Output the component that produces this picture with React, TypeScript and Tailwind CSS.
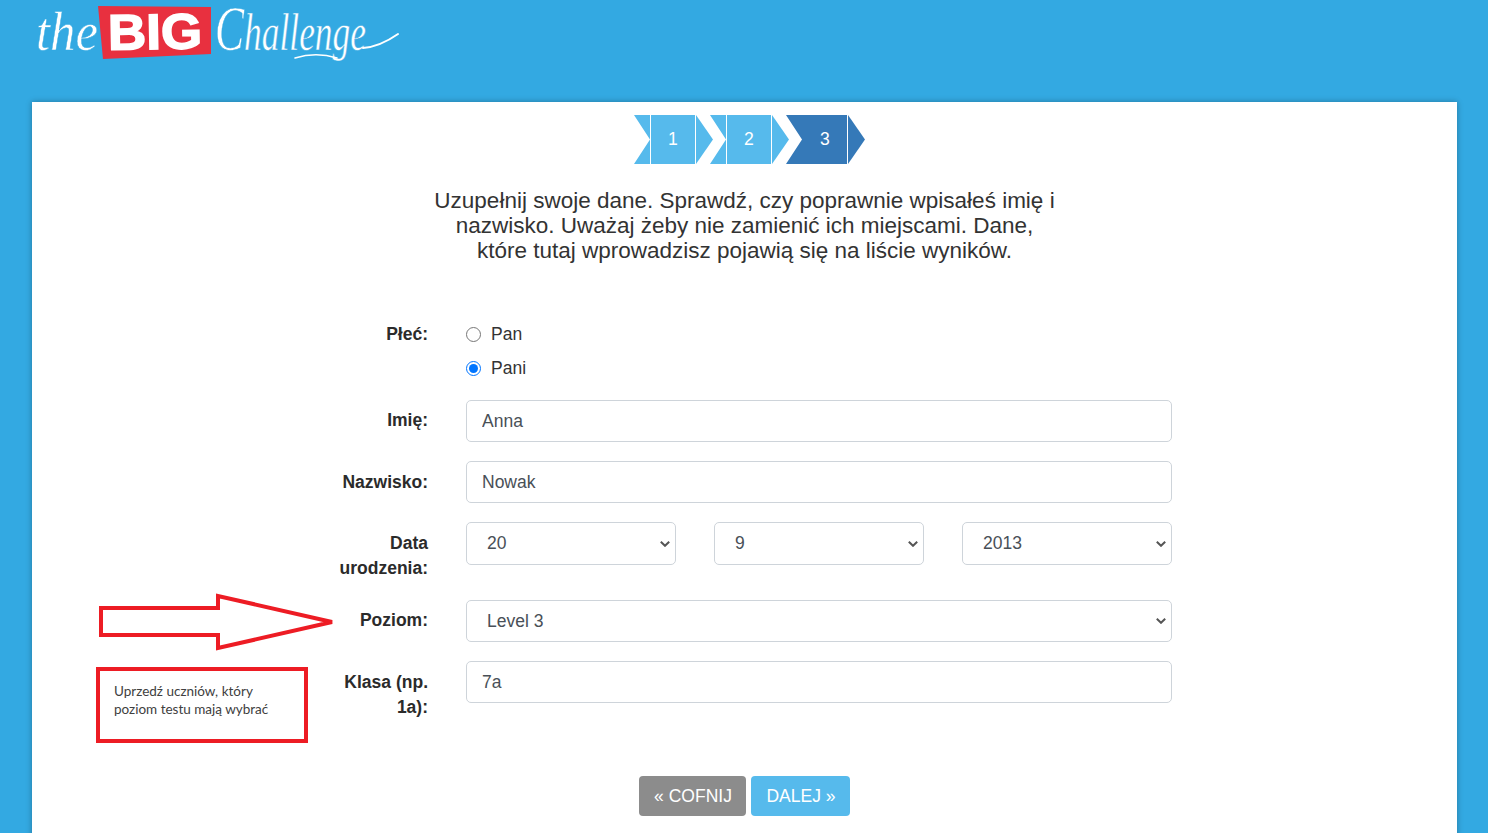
// Sign-up step 3 of the Big Challenge form
const INPUT_CLASS =
  "w-full h-[42px] px-[15px] bg-white border border-[#ced4da] rounded-[5px] text-[17.5px] text-[#495057] outline-none";
const LABEL_CLASS =
  "w-[98px] shrink-0 mr-[38px] text-right font-bold text-[17.5px] leading-[25px] text-[#2b2b2b]";

const Logo = () => (
  <svg width="370" height="76" viewBox="0 0 370 76" className="block overflow-visible">
    <polygon points="62,6 175,7 175,54 67,59" fill="#e8303f" />
    <text
      x="119"
      y="49"
      textAnchor="middle"
      fill="#fff"
      stroke="#fff"
      strokeWidth="1.6"
      transform="rotate(-1 119 30)"
      className="font-['Liberation_Sans'] font-bold text-[50px]"
      textLength="94"
      lengthAdjust="spacingAndGlyphs"
    >
      BIG
    </text>
    <text
      x="0"
      y="50"
      fill="#fff"
      stroke="#33a9e2"
      strokeWidth="0.5"
      className="font-['Liberation_Serif'] italic text-[54px]"
      textLength="62"
      lengthAdjust="spacingAndGlyphs"
    >
      the
    </text>
    <text
      x="179"
      y="50"
      fill="#fff"
      stroke="#33a9e2"
      strokeWidth="0.5"
      className="font-['Liberation_Serif'] italic text-[52px]"
      textLength="151"
      lengthAdjust="spacingAndGlyphs"
    >
      <tspan className="text-[64px]">C</tspan>hallenge
    </text>
    <path
      d="M327 48 C340 47 352 41 362 34"
      fill="none"
      stroke="#fff"
      strokeWidth="2"
      strokeLinecap="round"
    />
    <path
      d="M259 58 C272 54 288 54 301 58"
      fill="none"
      stroke="#fff"
      strokeWidth="1.5"
      strokeLinecap="round"
    />
  </svg>
);

const Step = ({
  n,
  color,
  first,
  active,
}: {
  n: number;
  color: string;
  first?: boolean;
  active?: boolean;
}) => (
  <svg
    width="79"
    height="49"
    viewBox="0 0 79 49"
    className={first ? "block" : "block -ml-[3px]"}
  >
    <polygon points="0,0 16,0 16,49 0,49 16,24.5" fill={color} />
    {/* the current step has no divider after its notch */}
    <rect x={active ? 16 : 17} y="0" width={active ? 45 : 44} height="49" fill={color} />
    <polygon points="62,0 79,24.5 62,49" fill={color} />
    <text
      x="39"
      y="30"
      textAnchor="middle"
      fill="#fff"
      className="font-['Liberation_Sans'] text-[17.6px]"
    >
      {n}
    </text>
  </svg>
);

const Row = ({
  label,
  labelClass,
  className,
  children,
}: {
  label: string;
  labelClass: string;
  className: string;
  children: React.ReactNode;
}) => (
  <div className={`flex ${className}`}>
    <label className={`${LABEL_CLASS} ${labelClass}`}>{label}</label>
    <div className="w-[706px]">{children}</div>
  </div>
);

const Select = ({ value, height }: { value: string; height: string }) => (
  <div className="relative">
    <select
      className={`w-full ${height} pl-[20px] appearance-none bg-white border border-[#ced4da] rounded-[5px] text-[17.5px] text-[#495057] outline-none`}
      defaultValue={value}
    >
      <option>{value}</option>
    </select>
    <svg
      width="10"
      height="6"
      viewBox="0 0 10 6"
      className="absolute right-[6px] top-1/2 -translate-y-1/2 pointer-events-none"
    >
      <path d="M0.8 0.8 L5 4.8 L9.2 0.8" fill="none" stroke="#555" strokeWidth="2" />
    </svg>
  </div>
);

export default function App() {
  return (
    <div className="relative h-screen overflow-hidden bg-[#33a9e2] font-['Liberation_Sans',Arial,sans-serif]">
      <header className="h-[102px] pl-[36px]">
        <Logo />
      </header>

      <main className="ml-[32px] mr-[31px] h-[800px] bg-white shadow-[0_0_6px_rgba(0,0,0,0.3)]">
        <div className="flex justify-center pt-[13px] pl-[10px]">
          <Step n={1} color="#56baec" first />
          <Step n={2} color="#56baec" />
          <Step n={3} color="#3579b8" active />
        </div>

        <p className="w-[630px] mx-auto mt-[24px] text-center text-[22.5px] leading-[25px] text-[#333]">
          Uzupełnij swoje dane. Sprawdź, czy poprawnie wpisałeś imię i nazwisko. Uważaj żeby nie
          zamienić ich miejscami. Dane, które tutaj wprowadzisz pojawią się na liście wyników.
        </p>

        <form className="ml-[298px] mt-[54px]">
          <Row label="Płeć:" labelClass="pt-[5px]" className="mb-[15px]">
            <label className="flex items-center h-[34px] text-[17.5px] text-[#333]">
              <input type="radio" name="gender" className="w-[15px] h-[15px] m-0 mr-[10px]" />
              Pan
            </label>
            <label className="flex items-center h-[34px] text-[17.5px] text-[#333]">
              <input
                type="radio"
                name="gender"
                defaultChecked
                className="w-[15px] h-[15px] m-0 mr-[10px]"
              />
              Pani
            </label>
          </Row>

          <Row label="Imię:" labelClass="pt-[8px]" className="mb-[19px]">
            <input className={INPUT_CLASS} defaultValue="Anna" />
          </Row>

          <Row label="Nazwisko:" labelClass="pt-[9px]" className="mb-[19px]">
            <input className={INPUT_CLASS} defaultValue="Nowak" />
          </Row>

          <Row label="Data urodzenia:" labelClass="pt-[9px]" className="mb-[19px]">
            <div className="grid grid-cols-3 gap-[38px]">
              <Select value="20" height="h-[43px]" />
              <Select value="9" height="h-[43px]" />
              <Select value="2013" height="h-[43px]" />
            </div>
          </Row>

          <Row label="Poziom:" labelClass="pt-[8px]" className="mb-[19px]">
            <Select value="Level 3" height="h-[42px]" />
          </Row>

          <Row label="Klasa (np. 1a):" labelClass="pt-[9px]" className="">
            <input className={INPUT_CLASS} defaultValue="7a" />
          </Row>
        </form>

        <div className="flex justify-center gap-[5px] mt-[56px]">
          <button
            type="button"
            className="h-[40px] w-[107px] pl-[1px] rounded-[4px] bg-[#8c8c8c] text-white text-[17.5px]"
          >
            « COFNIJ
          </button>
          <button
            type="button"
            className="h-[40px] w-[99px] pl-[1px] rounded-[4px] bg-[#56baec] text-white text-[17.5px]"
          >
            DALEJ »
          </button>
        </div>
      </main>

      {/* red annotations laid over the form */}
      <svg width="240" height="60" viewBox="0 0 240 60" className="absolute left-[98px] top-[593px]">
        <polygon
          points="3,15 120,15 120,3 234,29 120,55 120,42 3,42"
          fill="none"
          stroke="#ed1c24"
          strokeWidth="4"
        />
      </svg>
      <div className="absolute left-[96px] top-[667px] w-[212px] h-[76px] border-[4px] border-[#ed1c24] pl-[14px] pt-[11px] bg-white font-['Lato'] text-[13.5px] leading-[18px] text-[#404040]">
        Uprzedź uczniów, który
        <br />
        poziom testu mają wybrać
      </div>
    </div>
  );
}
